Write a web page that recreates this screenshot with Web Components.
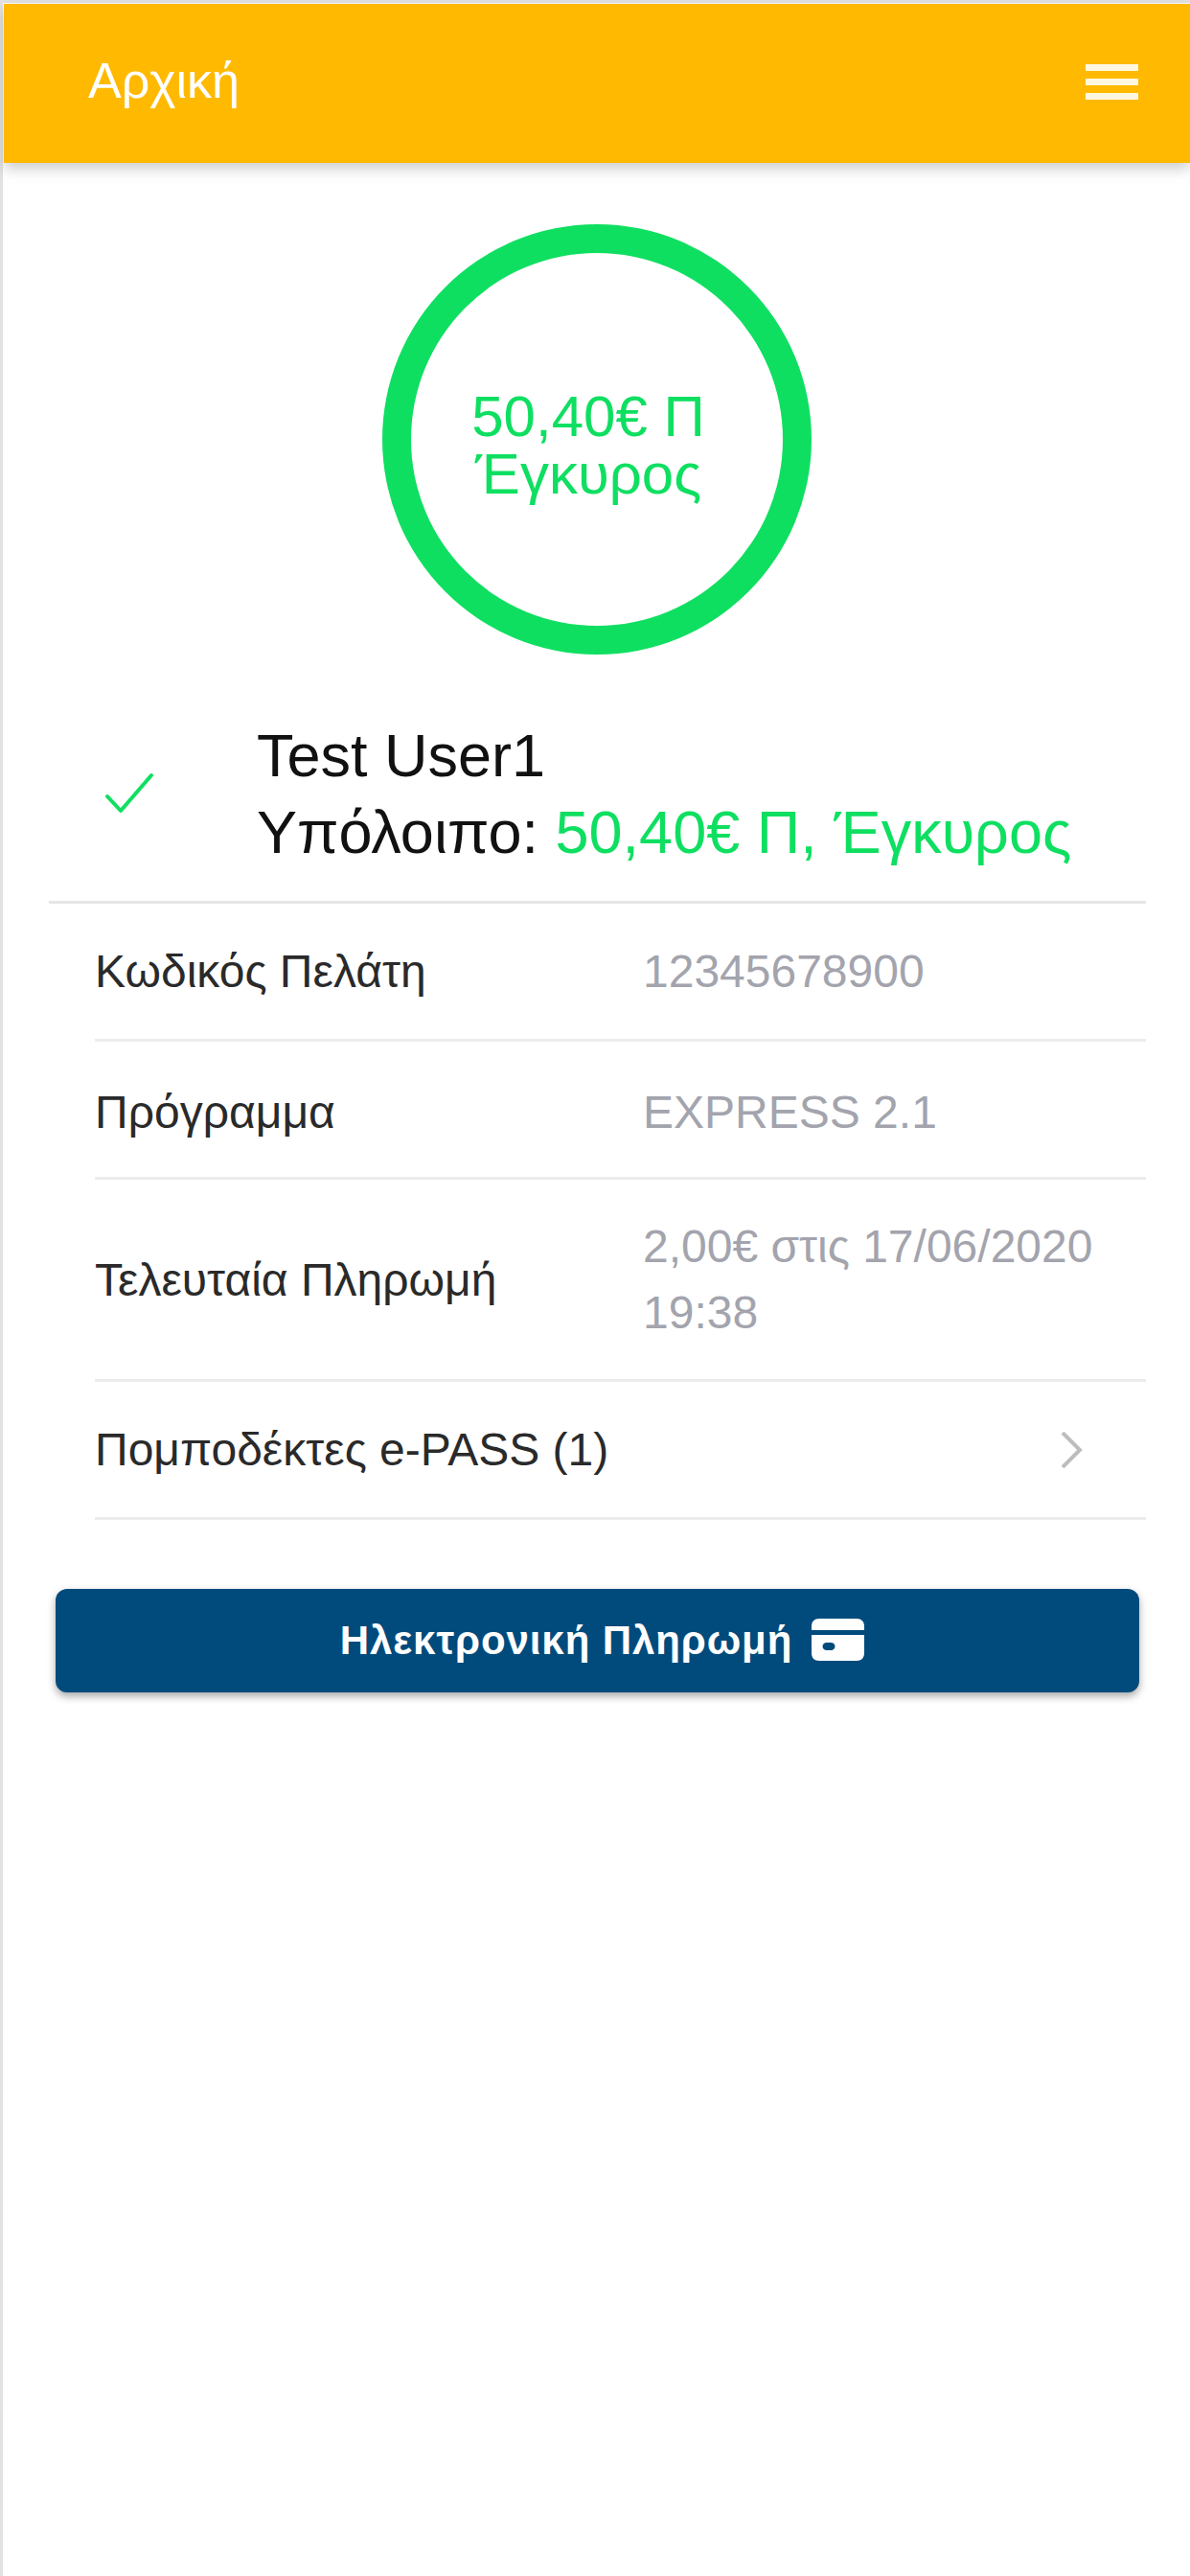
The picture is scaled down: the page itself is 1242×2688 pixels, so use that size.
<!DOCTYPE html>
<html lang="el">
<head>
<meta charset="utf-8">
<title>Αρχική</title>
<style>
  html, body { margin: 0; padding: 0; background: #fff; }
  body { font-family: "Liberation Sans", Arial, sans-serif; }
</style>
</head>
<body>
<app-page>
  <app-header slot="header">Αρχική</app-header>
  <balance-ring>50,40€ Π Έγκυρος</balance-ring>
  <account-summary name="Test User1" balance="50,40€ Π, Έγκυρος"></account-summary>
  <info-row label="Κωδικός Πελάτη">12345678900</info-row>
  <info-row label="Πρόγραμμα" class="low">EXPRESS 2.1</info-row>
  <info-row label="Τελευταία Πληρωμή">2,00€ στις 17/06/2020 19:38</info-row>
  <info-row label="Πομποδέκτες e-PASS (1)" chevron></info-row>
  <pay-button>Ηλεκτρονική Πληρωμή</pay-button>
</app-page>
<script>
class AppPage extends HTMLElement {
  constructor() {
    super();
    this.attachShadow({ mode: "open" });
    this.shadowRoot.innerHTML = `
      <style>
        :host {
          display: block;
          box-sizing: border-box;
          min-height: 2688px;
          padding: 4px 0 0 4px;
          background: #fff;
          font-family: "Liberation Sans", Arial, sans-serif;
          box-shadow: inset 3px 3px 0 #e2e2e2;
        }
      </style>
      <slot name="header"></slot>
      <slot></slot>
    `;
  }
}
customElements.define("app-page", AppPage);

class AppHeader extends HTMLElement {
  constructor() {
    super();
    this.attachShadow({ mode: "open" });
    this.shadowRoot.innerHTML = `
      <style>
        :host {
          display: flex;
          align-items: center;
          justify-content: space-between;
          box-sizing: border-box;
          height: 166px;
          padding: 0 54px 6px 88px;
          background: #ffb900;
          color: #fff;
          font-size: 52px;
          box-shadow: 0 6px 14px rgba(0,0,0,.2);
          position: relative;
        }
        .menu { display: flex; flex-direction: column; gap: 8px; width: 55px; padding-top: 2px; }
        .menu i { display: block; height: 7px; background: #fff; opacity: .88; }
      </style>
      <span><slot></slot></span>
      <span class="menu"><i></i><i></i><i></i></span>
    `;
  }
}
customElements.define("app-header", AppHeader);

class BalanceRing extends HTMLElement {
  constructor() {
    super();
    this.attachShadow({ mode: "open" });
    this.shadowRoot.innerHTML = `
      <style>
        :host {
          display: flex;
          align-items: center;
          justify-content: center;
          box-sizing: border-box;
          width: 448px;
          height: 449px;
          margin: 64px 0 0 395px;
          padding: 12px 18px 0 0;
          border: 30px solid #0fdf61;
          border-radius: 50%;
          color: #0fdf61;
          font-size: 60px;
          line-height: 60px;
          text-align: center;
        }
        .text { width: 260px; }
      </style>
      <div class="text"><slot></slot></div>
    `;
  }
}
customElements.define("balance-ring", BalanceRing);

class AccountSummary extends HTMLElement {
  constructor() {
    super();
    this.attachShadow({ mode: "open" });
    this.shadowRoot.innerHTML = `
      <style>
        :host {
          display: flex;
          align-items: center;
          box-sizing: border-box;
          height: 202px;
          margin: 58px 46px 0 47px;
          padding: 0 0 25px 58px;
          border-bottom: 3px solid #e6e6e6;
          font-size: 63px;
          line-height: 80px;
          color: #111;
        }
        svg { width: 52px; height: 44px; margin-right: 107px; flex: none; }
        .bal { color: #0fdf61; }
      </style>
      <svg viewBox="0 0 52 44" fill="none" stroke="#0fdf61" stroke-width="4" stroke-linecap="round" stroke-linejoin="round"><path d="M3 25 L17 40 L49 3"/></svg>
      <div>
        <div class="name"></div>
        <div>Υπόλοιπο: <span class="bal"></span></div>
      </div>
    `;
    this.shadowRoot.querySelector(".name").textContent = this.getAttribute("name") || "";
    this.shadowRoot.querySelector(".bal").textContent = this.getAttribute("balance") || "";
  }
}
customElements.define("account-summary", AccountSummary);

class InfoRow extends HTMLElement {
  constructor() {
    super();
    this.attachShadow({ mode: "open" });
  }
  connectedCallback() {
    const chevron = this.hasAttribute("chevron")
      ? `<svg viewBox="0 0 24 38" fill="none" stroke="#bdbdbd" stroke-width="4"><path d="M3 1 L21 19 L3 37"/></svg>`
      : "";
    this.shadowRoot.innerHTML = `
      <style>
        :host {
          display: grid;
          grid-template-columns: 572px 1fr;
          align-items: center;
          box-sizing: border-box;
          min-height: 144px;
          margin: 0 46px 0 95px;
          padding: 35px 0;
          border-bottom: 3px solid #ececec;
          font-size: 48px;
          line-height: 69px;
          color: #2a2a2a;
        }
        :host(.low) { padding: 39px 0 33px; }
        .value { color: #a3a4ad; padding-right: 40px; }
        .wrap { display: flex; justify-content: flex-end; padding-right: 66px; }
        svg { width: 24px; height: 38px; display: block; }
      </style>
      <div class="label">${this.getAttribute("label")}</div>
      ${chevron ? `<div class="wrap">${chevron}</div>` : `<div class="value"><slot></slot></div>`}
    `;
  }
}
customElements.define("info-row", InfoRow);

class PayButton extends HTMLElement {
  constructor() {
    super();
    this.attachShadow({ mode: "open" });
    this.shadowRoot.innerHTML = `
      <style>
        :host {
          display: flex;
          align-items: center;
          justify-content: center;
          gap: 20px;
          box-sizing: border-box;
          height: 108px;
          margin: 72px 53px 0 54px;
          padding-left: 10px;
          border-radius: 12px;
          background: #004b7c;
          color: #fff;
          font-size: 42px;
          font-weight: 700;
          letter-spacing: .9px;
          box-shadow: 0 4px 8px rgba(0,0,0,.35);
        }
        svg { width: 55px; height: 44px; flex: none; position: relative; top: -1px; }
      </style>
      <span><slot></slot></span>
      <svg viewBox="0 0 55 44" fill="#fff">
        <path d="M0 12 V8 C0 3 3 0 8 0 H47 C52 0 55 3 55 8 V12 Z"/>
        <path fill-rule="evenodd" d="M0 17 H55 V36 C55 41 52 44 47 44 H8 C3 44 0 41 0 36 Z M16 25 C10 25 10 33 16 33 H20 C26 33 26 25 20 25 Z"/>
      </svg>
    `;
  }
}
customElements.define("pay-button", PayButton);
</script>
</body>
</html>
